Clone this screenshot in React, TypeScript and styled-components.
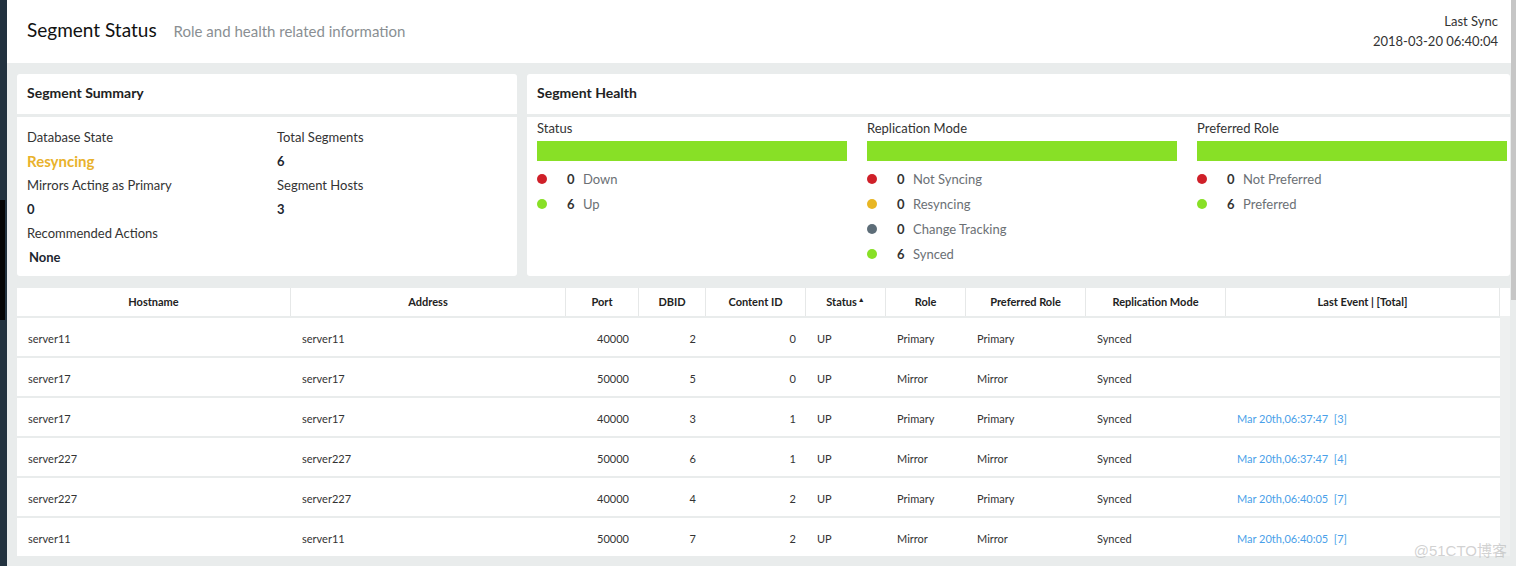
import { Fragment } from 'react';
import styled, { createGlobalStyle } from 'styled-components';

const GlobalStyle = createGlobalStyle`
    html, body {
        margin: 0;
        padding: 0;
        background: #e9ecec;
        font-family: Lato, 'Open Sans', sans-serif;
        color: #333;
    }
    * {
        box-sizing: border-box;
    }
`;

type Tone = 'red' | 'green' | 'yellow' | 'grey';

const TONES: Record<Tone, string> = {
    red: '#cf2029',
    green: '#88e026',
    yellow: '#e8b624',
    grey: '#5d6d78',
};

const healthGroups: {
    title: string;
    items: { tone: Tone; count: number; label: string }[];
}[] = [
    {
        title: 'Status',
        items: [
            { tone: 'red', count: 0, label: 'Down' },
            { tone: 'green', count: 6, label: 'Up' },
        ],
    },
    {
        title: 'Replication Mode',
        items: [
            { tone: 'red', count: 0, label: 'Not Syncing' },
            { tone: 'yellow', count: 0, label: 'Resyncing' },
            { tone: 'grey', count: 0, label: 'Change Tracking' },
            { tone: 'green', count: 6, label: 'Synced' },
        ],
    },
    {
        title: 'Preferred Role',
        items: [
            { tone: 'red', count: 0, label: 'Not Preferred' },
            { tone: 'green', count: 6, label: 'Preferred' },
        ],
    },
];

const columns = [
    { title: 'Hostname', align: 'left' },
    { title: 'Address', align: 'left' },
    { title: 'Port', align: 'right' },
    { title: 'DBID', align: 'right' },
    { title: 'Content ID', align: 'right' },
    { title: 'Status', align: 'left', sorted: true },
    { title: 'Role', align: 'left' },
    { title: 'Preferred Role', align: 'left' },
    { title: 'Replication Mode', align: 'left' },
    { title: 'Last Event | [Total]', align: 'left' },
] as const;

const rows = [
    ['server11', 'server11', '40000', '2', '0', 'UP', 'Primary', 'Primary', 'Synced', ''],
    ['server17', 'server17', '50000', '5', '0', 'UP', 'Mirror', 'Mirror', 'Synced', ''],
    ['server17', 'server17', '40000', '3', '1', 'UP', 'Primary', 'Primary', 'Synced', 'Mar 20th,06:37:47  [3]'],
    ['server227', 'server227', '50000', '6', '1', 'UP', 'Mirror', 'Mirror', 'Synced', 'Mar 20th,06:37:47  [4]'],
    ['server227', 'server227', '40000', '4', '2', 'UP', 'Primary', 'Primary', 'Synced', 'Mar 20th,06:40:05  [7]'],
    ['server11', 'server11', '50000', '7', '2', 'UP', 'Mirror', 'Mirror', 'Synced', 'Mar 20th,06:40:05  [7]'],
];

const App = () => {
    return (
        <>
            <GlobalStyle />
            <Page>
                <SideStrip>
                    <StripShadow />
                </SideStrip>
                <Main>
                    <TopBar>
                        <TitleGroup>
                            <Title>Segment Status</Title>
                            <Subtitle>Role and health related information</Subtitle>
                        </TitleGroup>
                        <SyncInfo>
                            <span>Last Sync</span>
                            <span>2018-03-20 06:40:04</span>
                        </SyncInfo>
                    </TopBar>

                    <Content>
                        <CardRow>
                            <Card $width="500px">
                                <CardHeader>Segment Summary</CardHeader>
                                <SummaryBody>
                                    <SummaryCol>
                                        <SummaryLabel>Database State</SummaryLabel>
                                        <SummaryValue $accent>Resyncing</SummaryValue>
                                        <SummaryLabel>Mirrors Acting as Primary</SummaryLabel>
                                        <SummaryValue>0</SummaryValue>
                                        <SummaryLabel>Recommended Actions</SummaryLabel>
                                        <SummaryValue $indent>None</SummaryValue>
                                    </SummaryCol>
                                    <SummaryCol>
                                        <SummaryLabel>Total Segments</SummaryLabel>
                                        <SummaryValue>6</SummaryValue>
                                        <SummaryLabel>Segment Hosts</SummaryLabel>
                                        <SummaryValue>3</SummaryValue>
                                    </SummaryCol>
                                </SummaryBody>
                            </Card>

                            <Card $width="auto">
                                <CardHeader>Segment Health</CardHeader>
                                <HealthBody>
                                    {healthGroups.map((group) => (
                                        <HealthGroup key={group.title}>
                                            <HealthTitle>{group.title}</HealthTitle>
                                            <HealthBar />
                                            <Legend>
                                                {group.items.map((item) => (
                                                    <LegendItem key={item.label}>
                                                        <Dot $tone={item.tone} />
                                                        <LegendCount>{item.count}</LegendCount>
                                                        <LegendLabel>{item.label}</LegendLabel>
                                                    </LegendItem>
                                                ))}
                                            </Legend>
                                        </HealthGroup>
                                    ))}
                                </HealthBody>
                            </Card>
                        </CardRow>

                        <Table>
                            {columns.map((col) => (
                                <HeadCell key={col.title}>
                                    {col.title}
                                    {'sorted' in col && col.sorted && <SortCaret>▲</SortCaret>}
                                </HeadCell>
                            ))}
                            <HeadCell />
                            {rows.map((row, r) => (
                                <Fragment key={r}>
                                    {row.map((value, c) => (
                                        <BodyCell
                                            key={c}
                                            $align={columns[c].align}
                                            $link={c === 9}
                                        >
                                            {value}
                                        </BodyCell>
                                    ))}
                                    <Gutter />
                                </Fragment>
                            ))}
                        </Table>
                    </Content>
                </Main>
                <Scrollbar>
                    <Thumb />
                </Scrollbar>
                <Watermark>@51CTO博客</Watermark>
            </Page>
        </>
    );
};

const Page = styled.div`
    position: relative;
    display: flex;
    width: 1516px;
    min-height: 566px;
    overflow: hidden;
`;

const SideStrip = styled.div`
    width: 7px;
    flex-shrink: 0;
    background: #22323f;
    padding-top: 200px;
`;

const StripShadow = styled.div`
    width: 5px;
    height: 120px;
    background: #050505;
`;

const Main = styled.div`
    flex: 1;
    min-width: 0;
    display: flex;
    flex-direction: column;
`;

const TopBar = styled.header`
    height: 63px;
    background: #fff;
    display: flex;
    justify-content: space-between;
    align-items: flex-start;
    padding: 0 13px 0 20px;
`;

const TitleGroup = styled.div`
    display: flex;
    align-items: baseline;
    gap: 17px;
    padding-top: 18px;
`;

const Title = styled.h1`
    margin: 0;
    font-size: 19px;
    font-weight: 400;
    color: #111;
`;

const Subtitle = styled.span`
    font-size: 15px;
    color: #8a8f93;
`;

const SyncInfo = styled.div`
    display: flex;
    flex-direction: column;
    align-items: flex-end;
    padding-top: 11px;
    font-size: 13px;
    line-height: 20px;
    color: #333;
`;

const Content = styled.main`
    padding: 11px 1px 10px 10px;
    display: flex;
    flex-direction: column;
    gap: 12px;
`;

const CardRow = styled.div`
    display: flex;
    gap: 10px;
    height: 202px;
`;

const Card = styled.section<{ $width: string }>`
    width: ${(p) => p.$width};
    flex: ${(p) => (p.$width === 'auto' ? '1' : '0 0 auto')};
    min-width: 0;
    display: flex;
    flex-direction: column;
    gap: 3px;
`;

const CardHeader = styled.h2`
    margin: 0;
    height: 40px;
    display: flex;
    align-items: center;
    padding: 0 10px 4px;
    background: #fff;
    border-radius: 3px 3px 0 0;
    font-size: 14px;
    font-weight: 700;
    color: #222;
`;

const SummaryBody = styled.div`
    flex: 1;
    background: #fff;
    border-radius: 0 0 3px 3px;
    display: grid;
    grid-template-columns: 250px 1fr;
    padding: 8px 10px 0;
`;

const SummaryCol = styled.div`
    display: flex;
    flex-direction: column;
`;

const SummaryLabel = styled.div`
    height: 24px;
    line-height: 24px;
    font-size: 13px;
    color: #333;
`;

const SummaryValue = styled.div<{ $accent?: boolean; $indent?: boolean }>`
    height: 24px;
    line-height: 24px;
    font-size: ${(p) => (p.$accent ? '15px' : '13px')};
    font-weight: 700;
    color: ${(p) => (p.$accent ? '#e9b22c' : '#1d2630')};
    padding-left: ${(p) => (p.$indent ? '2px' : '0')};
`;

const HealthBody = styled.div`
    flex: 1;
    background: #fff;
    border-radius: 0 0 3px 3px;
    display: grid;
    grid-template-columns: repeat(3, 310px);
    gap: 20px;
    padding: 0 3px 0 10px;
`;

const HealthGroup = styled.div`
    display: flex;
    flex-direction: column;
`;

const HealthTitle = styled.div`
    height: 22px;
    line-height: 22px;
    font-size: 13px;
    color: #333;
`;

const HealthBar = styled.div`
    margin-top: 2px;
    height: 20px;
    background: #88e026;
`;

const Legend = styled.ul`
    list-style: none;
    margin: 5px 0 0;
    padding: 0;
`;

const LegendItem = styled.li`
    display: flex;
    align-items: center;
    height: 25px;
    font-size: 13px;
`;

const Dot = styled.span<{ $tone: Tone }>`
    width: 10px;
    height: 10px;
    border-radius: 50%;
    background: ${(p) => TONES[p.$tone]};
    margin-right: 20px;
`;

const LegendCount = styled.span`
    font-weight: 700;
    color: #333;
    min-width: 8px;
    margin-right: 8px;
`;

const LegendLabel = styled.span`
    color: #6b7075;
`;

const Table = styled.div`
    display: grid;
    grid-template-columns: 274px 275px 73px 67px 100px 80px 80px 120px 140px 274px 10px;
    grid-template-rows: 28px;
    grid-auto-rows: 38px;
    row-gap: 2px;
    font-size: 11px;
`;

const HeadCell = styled.div`
    background: #fff;
    border-right: 1px solid #e6e8e8;
    display: flex;
    align-items: center;
    justify-content: center;
    padding-bottom: 1px;
    font-weight: 700;
    color: #222;

    &:nth-child(11) {
        border-right: none;
    }
`;

const SortCaret = styled.span`
    font-size: 7px;
    margin-left: 1px;
    position: relative;
    top: -3px;
`;

const BodyCell = styled.div<{ $align: 'left' | 'right'; $link: boolean }>`
    background: #fff;
    display: flex;
    align-items: center;
    justify-content: ${(p) => (p.$align === 'right' ? 'flex-end' : 'flex-start')};
    padding: ${(p) => (p.$align === 'right' ? '2px 10px 0 0' : '2px 0 0 11px')};
    color: ${(p) => (p.$link ? '#4a9fe9' : '#333')};
    white-space: pre;
`;

const Gutter = styled.div`
    background: #eef0f0;
    margin-top: -2px;
    height: 40px;
`;

const Scrollbar = styled.div`
    width: 5px;
    flex-shrink: 0;
    background: #e9ecec;
`;

const Thumb = styled.div`
    height: 300px;
    background: #c6c6c6;
`;

const Watermark = styled.div`
    position: absolute;
    right: 9px;
    bottom: 6px;
    font-family: 'Liberation Sans', 'Noto Sans CJK SC', sans-serif;
    font-size: 15px;
    color: rgba(180, 180, 180, 0.6);
`;

export default App;
